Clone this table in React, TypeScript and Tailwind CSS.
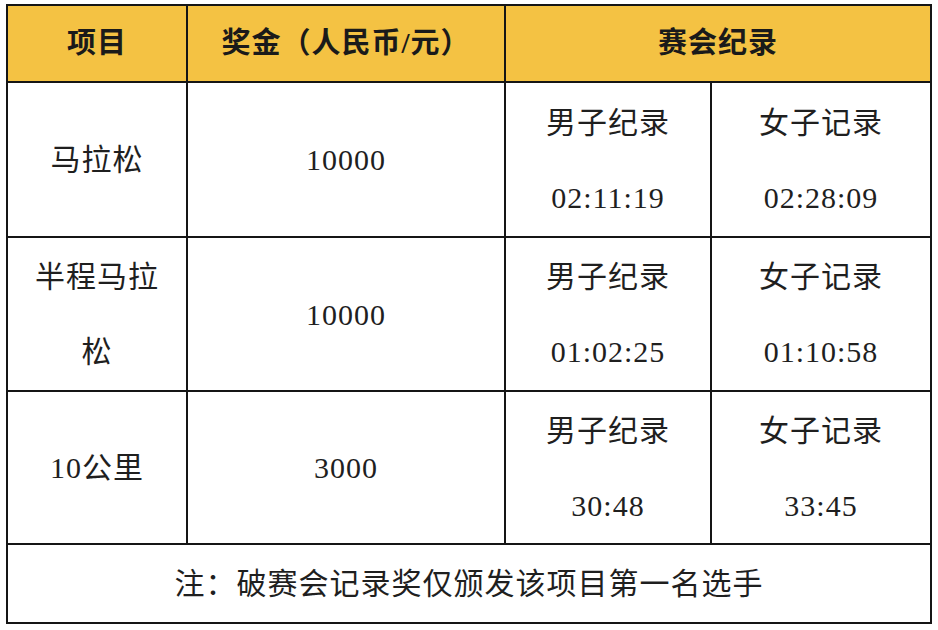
const font = {
  fontFamily: '"Liberation Serif", "Noto Sans CJK SC", serif',
};

type Row = {
  name: string;
  prize: string;
  men: string;
  women: string;
};

const rows: Row[] = [
  { name: "马拉松", prize: "10000", men: "02:11:19", women: "02:28:09" },
  { name: "半程马拉松", prize: "10000", men: "01:02:25", women: "01:10:58" },
  { name: "10公里", prize: "3000", men: "30:48", women: "33:45" },
];

function Cell({ children, className = "" }: { children: React.ReactNode; className?: string }) {
  return (
    <div className={`flex items-center justify-center bg-white text-center ${className}`}>
      {children}
    </div>
  );
}

function RecordCell({ label, time }: { label: string; time: string }) {
  return (
    <Cell>
      <div className="leading-[75px]">
        <div>{label}</div>
        <div>{time}</div>
      </div>
    </Cell>
  );
}

export default function App() {
  return (
    <div className="min-h-[630px] w-[938px] bg-white pl-[6px] pt-[4px]" style={font}>
      <div className="grid w-[926px] grid-cols-[178px_316px_204px_218px] grid-rows-[75px_153px_152px_151px_77px] gap-[2px] bg-[#151515] p-[2px] text-[30px] tracking-[1px] text-[#1f1f1f]">
        {/* header */}
        <div className="flex items-center justify-center bg-[#f4c243] text-[29px] font-bold tracking-[1px] text-[#1a1a1a]">
          项目
        </div>
        <div className="flex items-center justify-center bg-[#f4c243] text-[29px] font-bold tracking-[1px] text-[#1a1a1a]">
          奖金（人民币/元）
        </div>
        <div className="col-span-2 flex items-center justify-center bg-[#f4c243] text-[29px] font-bold tracking-[1px] text-[#1a1a1a]">
          赛会纪录
        </div>

        {rows.map((r) => (
          <div key={r.name} className="contents">
            <Cell className="px-4">
              <div className="leading-[75px]">{r.name}</div>
            </Cell>
            <Cell>{r.prize}</Cell>
            <RecordCell label="男子纪录" time={r.men} />
            <RecordCell label="女子记录" time={r.women} />
          </div>
        ))}

        {/* footnote */}
        <Cell className="col-span-4">注：破赛会记录奖仅颁发该项目第一名选手</Cell>
      </div>
    </div>
  );
}
